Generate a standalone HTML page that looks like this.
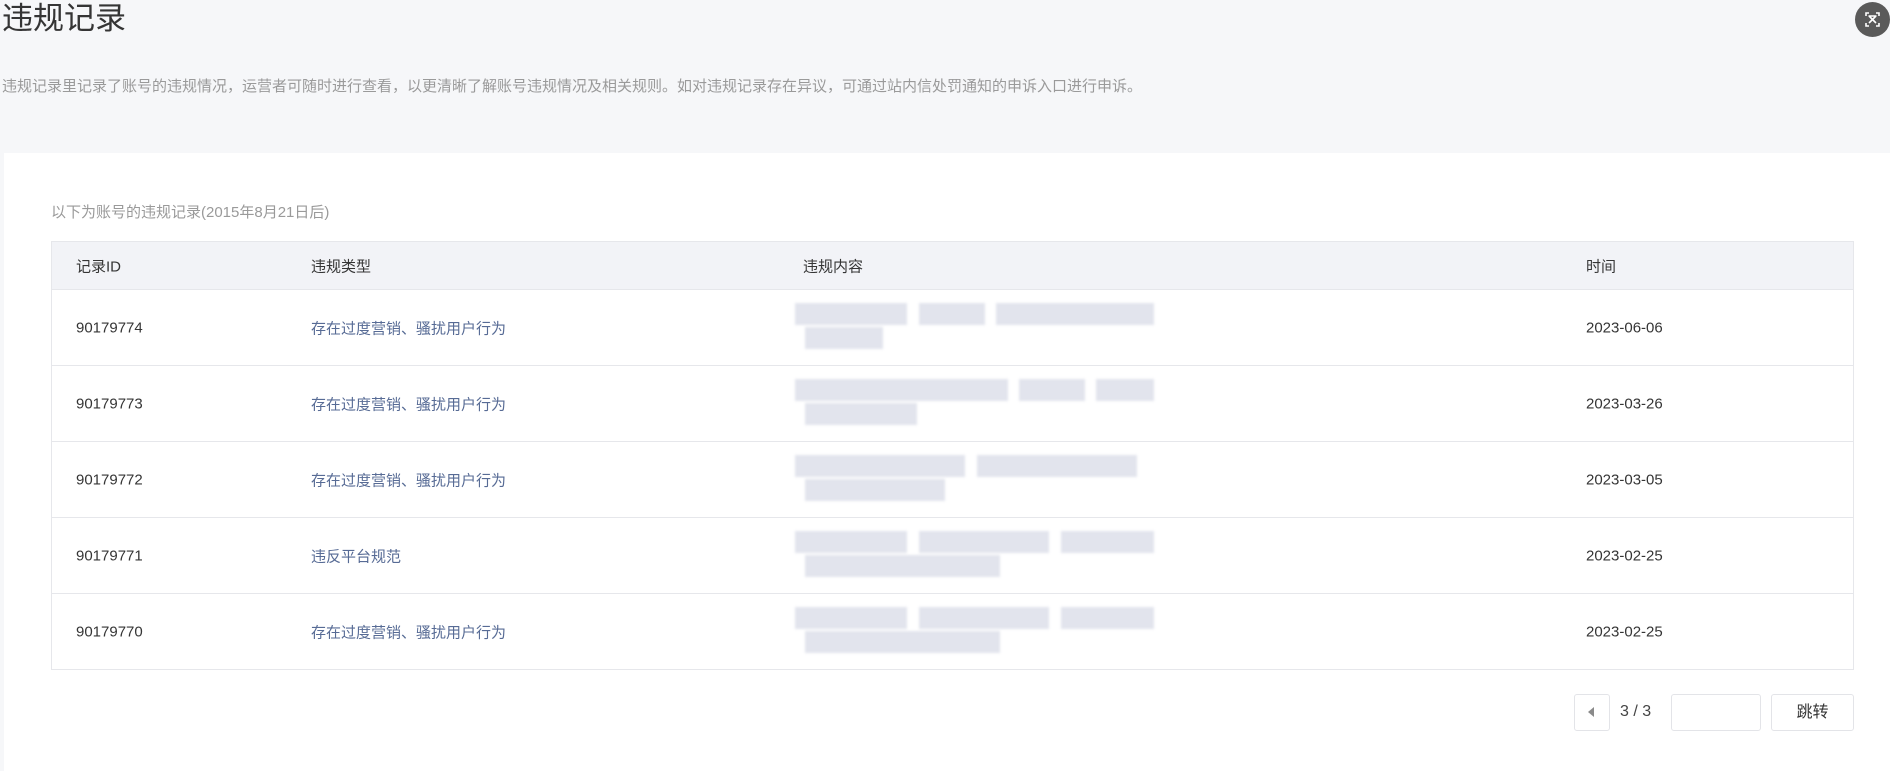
<!DOCTYPE html>
<html><head><meta charset="utf-8"><style>
*{margin:0;padding:0;box-sizing:border-box}
body{width:1890px;height:771px;background:#f6f7f9;font-family:"Liberation Sans","Noto Sans CJK SC",sans-serif;position:relative;overflow:hidden;color:#353535}
.title{position:absolute;left:2px;top:0px;font-size:31px;line-height:38px;color:#353535}
.desc{position:absolute;left:2px;top:77px;font-size:15px;line-height:20px;color:#9a9a9a}
.card{position:absolute;left:4px;top:153px;width:1886px;height:618px;background:#fff}
.sub{position:absolute;left:51px;top:203px;font-size:15px;line-height:20px;color:#9a9a9a}
.tbl{position:absolute;left:51px;top:241px;width:1803px;height:429px;border:1px solid #e6e7eb}
.hd{height:48px;background:#f2f3f7;border-bottom:1px solid #e6e7eb;position:relative}
.row{height:76px;border-bottom:1px solid #e6e7eb;position:relative}
.row:last-child{border-bottom:none}
.c{position:absolute;font-size:15px;top:50%;transform:translateY(-50%);white-space:nowrap}
.c1{left:24px}.c2{left:259px}.c3{left:751px}.c4{left:1534px}
.t{color:#576b95}
.hd .c{color:#353535}
.m{position:absolute;left:743px;top:13px;width:360px;height:50px;filter:blur(1.2px)}
.m div{position:absolute;height:22px;background:#e2e4ed}
.pg{position:absolute;top:694px;height:37px;border:1px solid #e3e4e8;border-radius:3px;background:#fff}
.close{position:absolute;left:1855px;top:2px;width:35px;height:35px;border-radius:50%;background:#5a5a5a}
</style></head><body>
<div class="title">违规记录</div>
<div class="desc">违规记录里记录了账号的违规情况，运营者可随时进行查看，以更清晰了解账号违规情况及相关规则。如对违规记录存在异议，可通过站内信处罚通知的申诉入口进行申诉。</div>
<div class="close"><svg width="35" height="35" viewBox="0 0 35 35"><g stroke="#fff" stroke-width="1.6" fill="none"><path d="M11 14v-3h3M21 11h3v3M24 21v3h-3M14 24h-3v-3"/><path d="M14 14l7 7M21 14l-7 7M13.5 14h8"/></g></svg></div>
<div class="card"></div>
<div class="sub">以下为账号的违规记录(2015年8月21日后)</div>
<div class="tbl">
<div class="hd"><span class="c c1">记录ID</span><span class="c c2">违规类型</span><span class="c c3">违规内容</span><span class="c c4">时间</span></div>
<div class="row"><span class="c c1">90179774</span><span class="c c2 t">存在过度营销、骚扰用户行为</span><div class="m"><div style="left:0;top:0;width:112px"></div><div style="left:124px;top:0;width:66px"></div><div style="left:201px;top:0;width:158px"></div><div style="left:10px;top:24px;width:78px"></div></div><span class="c c4">2023-06-06</span></div>
<div class="row"><span class="c c1">90179773</span><span class="c c2 t">存在过度营销、骚扰用户行为</span><div class="m"><div style="left:0;top:0;width:213px"></div><div style="left:224px;top:0;width:66px"></div><div style="left:301px;top:0;width:58px"></div><div style="left:10px;top:24px;width:112px"></div></div><span class="c c4">2023-03-26</span></div>
<div class="row"><span class="c c1">90179772</span><span class="c c2 t">存在过度营销、骚扰用户行为</span><div class="m"><div style="left:0;top:0;width:170px"></div><div style="left:182px;top:0;width:160px"></div><div style="left:10px;top:24px;width:140px"></div></div><span class="c c4">2023-03-05</span></div>
<div class="row"><span class="c c1">90179771</span><span class="c c2 t">违反平台规范</span><div class="m"><div style="left:0;top:0;width:112px"></div><div style="left:124px;top:0;width:130px"></div><div style="left:266px;top:0;width:93px"></div><div style="left:10px;top:24px;width:195px"></div></div><span class="c c4">2023-02-25</span></div>
<div class="row"><span class="c c1">90179770</span><span class="c c2 t">存在过度营销、骚扰用户行为</span><div class="m"><div style="left:0;top:0;width:112px"></div><div style="left:124px;top:0;width:130px"></div><div style="left:266px;top:0;width:93px"></div><div style="left:10px;top:24px;width:195px"></div></div><span class="c c4">2023-02-25</span></div>
</div>
<div class="pg" style="left:1574px;width:36px"><svg width="36" height="37" style="position:absolute;left:-1px;top:-1px"><path d="M20 13v10l-6-5z" fill="#8a8a8a"/></svg></div>
<div style="position:absolute;left:1620px;top:703px;font-size:16px;color:#444">3 / 3</div>
<div class="pg" style="left:1671px;width:90px"></div>
<div class="pg" style="left:1771px;width:83px;font-size:16px;line-height:35px;text-align:center;color:#353535">跳转</div>
</body></html>
